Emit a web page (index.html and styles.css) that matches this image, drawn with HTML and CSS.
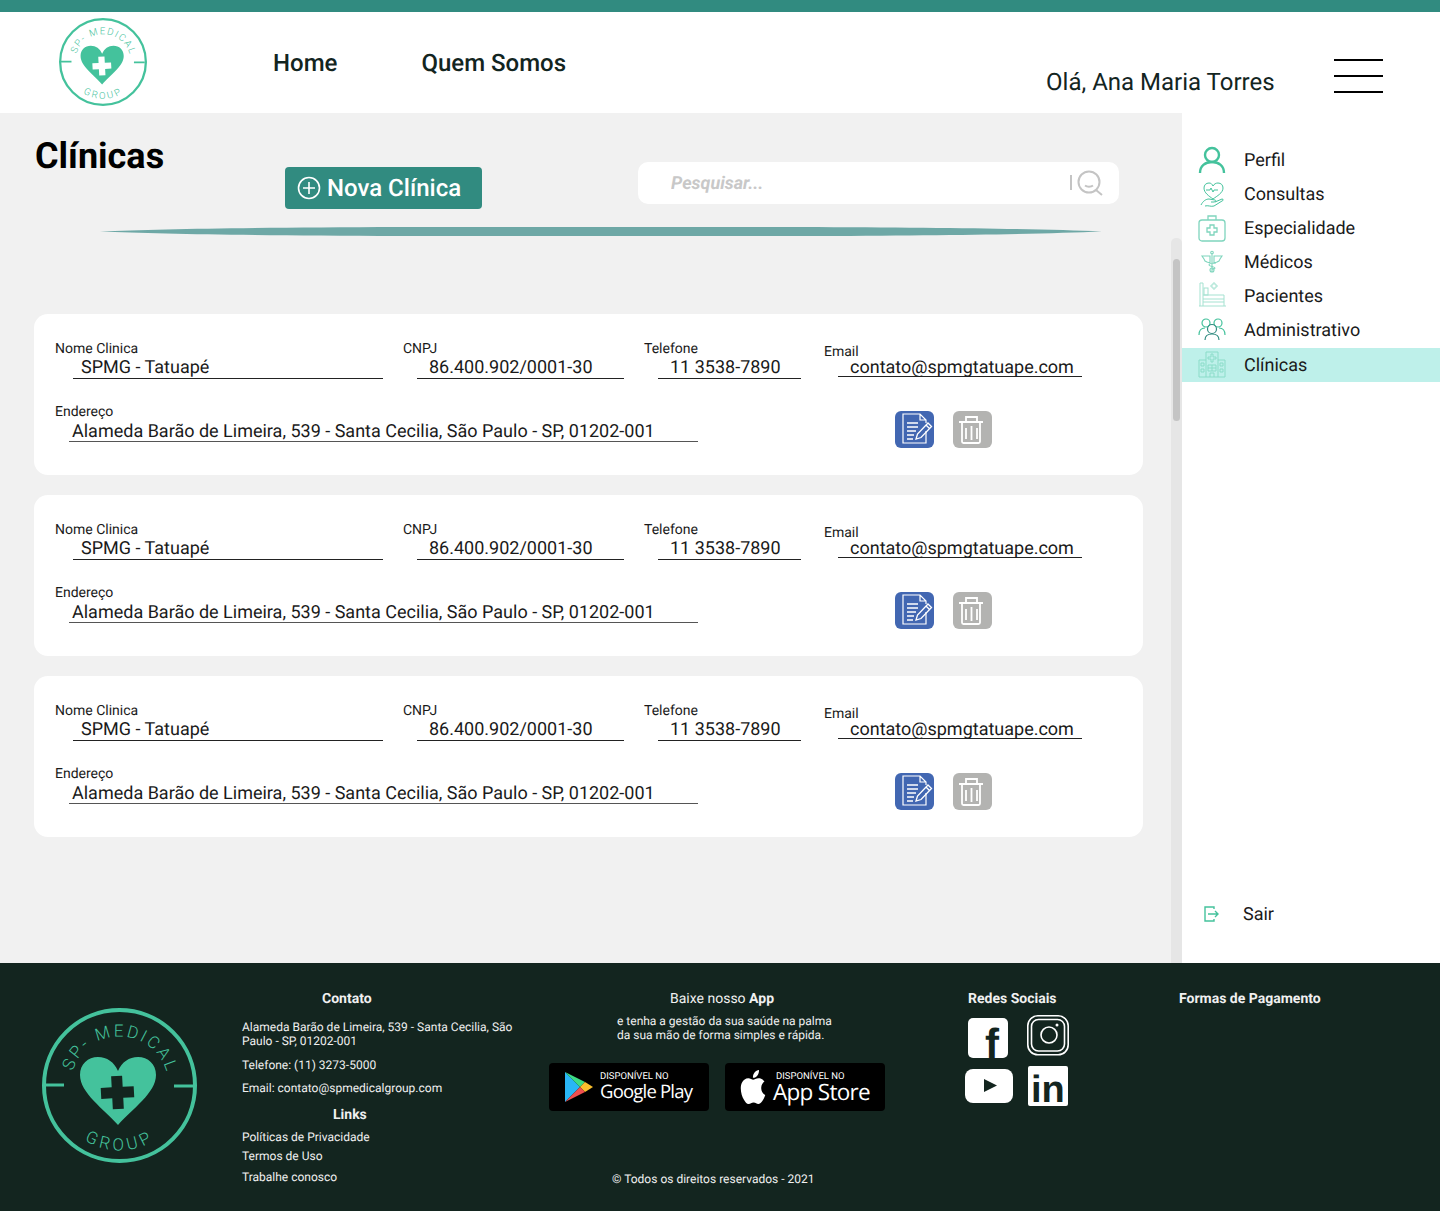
FILE: index.html
```html
<!DOCTYPE html>
<html lang="en">
<head>
    <meta charset="UTF-8">
    <meta name="viewport" content="width=device-width, initial-scale=1.0">
    <title>SP Medical Group - Clínicas</title>
    <link rel="stylesheet" href="styles.css">
</head>
<body>
    <svg class="defs" width="0" height="0">
        <symbol id="logo" viewBox="0 0 155 155" overflow="visible">
            <path id="arcTop" d="M28.5 77.5a49 49 0 0 1 98 0" fill="none"/>
            <path id="arcBottom" d="M12.5 77.5a65 65 0 0 0 130 0" fill="none"/>
            <circle cx="77.5" cy="77.5" r="75.5" fill="none" stroke="currentColor" stroke-width="4"/>
            <path d="M3 77h19M132 78h19" stroke="currentColor" stroke-width="3" fill="none"/>
            <path d="M76 117C62 101 38 85 38 67c0-11 8-18 18-18 9 0 16 5 20 14 4-9 11-14 20-14 10 0 18 7 18 18 0 18-24 34-38 50z" fill="currentColor"/>
            <path d="M70 68h11v11h11v11H81v11H70V90H59V79h11z" class="logo-cut" transform="rotate(-3 76 85)"/>
            <text class="logo-text" fill="currentColor" text-anchor="middle"><textPath href="#arcTop" startOffset="51%" textLength="128">SP- MEDICAL</textPath></text>
            <text class="logo-text" fill="currentColor" text-anchor="middle"><textPath href="#arcBottom" startOffset="50%" textLength="74">GROUP</textPath></text>
        </symbol>
        <symbol id="icon-edit" viewBox="0 0 39 37">
            <rect width="39" height="37" rx="6" fill="#4267b2"/>
            <path d="M31 20v12H8V3h17l6 6v3M25 3v6h6" fill="none" stroke="#fff" stroke-width="1.2"/>
            <path d="M12 12h11M12 16h11M12 20h9M12 24h7M12 28h6" stroke="#fff" stroke-width="1.3" fill="none"/>
            <path d="M21 28l1.5-5L33 12l3.5 3.5L26 26.5zM31 14l3.5 3.5" fill="none" stroke="#fff" stroke-width="1.3"/>
        </symbol>
        <symbol id="icon-trash" viewBox="0 0 39 37">
            <rect width="39" height="37" rx="6" fill="#b3b3b1"/>
            <path d="M6 11h24M13 10.5V6h11v4.5M9 12v18.5q0 1.5 1.5 1.5h15q1.500 0 1.500-1.500V12" fill="none" stroke="#fff" stroke-width="1.8"/>
            <path d="M13 17v11M18.5 15v14M24 17v11" stroke="#fff" stroke-width="1.8" fill="none"/>
        </symbol>
    </svg>

    <div class="topbar"></div>

    <header class="header">
        <svg class="header-logo"><use href="#logo"/></svg>
        <nav class="nav">
            <a class="nav-home">Home</a>
            <a class="nav-about">Quem Somos</a>
        </nav>
        <div class="user">Olá, Ana Maria Torres</div>
        <div class="burger"><span></span><span></span><span></span></div>
    </header>

    <div class="content">
        <main class="main">
            <div class="toolbar">
                <h1>Clínicas</h1>
                <button type="button" class="new-btn">
                    <svg width="24" height="24" viewBox="0 0 24 24" fill="none" stroke="#fff" stroke-width="1.6"><circle cx="12" cy="12" r="10.5"/><path d="M12 6v12M6 12h12"/></svg>
                    Nova Clínica
                </button>
                <div class="search">
                    <input type="text" placeholder="Pesquisar...">
                    <svg width="33" height="26" viewBox="0 0 33 26" fill="none" stroke="#c4c4c4" stroke-width="2"><path d="M1 5v15"/><circle cx="19" cy="12" r="10.5"/><path d="M26 20l6 5M15 15.5c2 1.5 6 1.5 8 0"/></svg>
                </div>
            </div>

            <svg class="divider" viewBox="0 0 1002 9" preserveAspectRatio="none"><path d="M0 4.5C60 2 150 .5 300 0h400c150 .5 240 2 302 4.5C940 7 850 8.5 700 9H300C150 8.5 60 7 0 4.5z"/></svg>

            <section class="cards">
                <article class="card">
                    <div class="row">
                        <div class="field f-name"><label>Nome Clinica</label><div class="value">SPMG - Tatuapé</div></div>
                        <div class="field f-cnpj"><label>CNPJ</label><div class="value">86.400.902/0001-30</div></div>
                        <div class="field f-phone"><label>Telefone</label><div class="value">11 3538-7890</div></div>
                        <div class="field f-email"><label>Email</label><div class="value">contato@spmgtatuape.com</div></div>
                    </div>
                    <div class="row row-address">
                        <div class="field f-address"><label>Endereço</label><div class="value">Alameda Barão de Limeira, 539 - Santa Cecilia, São Paulo - SP, 01202-001</div></div>
                        <div class="actions">
                            <svg class="action"><use href="#icon-edit"/></svg>
                            <svg class="action"><use href="#icon-trash"/></svg>
                        </div>
                    </div>
                </article>
                <article class="card">
                    <div class="row">
                        <div class="field f-name"><label>Nome Clinica</label><div class="value">SPMG - Tatuapé</div></div>
                        <div class="field f-cnpj"><label>CNPJ</label><div class="value">86.400.902/0001-30</div></div>
                        <div class="field f-phone"><label>Telefone</label><div class="value">11 3538-7890</div></div>
                        <div class="field f-email"><label>Email</label><div class="value">contato@spmgtatuape.com</div></div>
                    </div>
                    <div class="row row-address">
                        <div class="field f-address"><label>Endereço</label><div class="value">Alameda Barão de Limeira, 539 - Santa Cecilia, São Paulo - SP, 01202-001</div></div>
                        <div class="actions">
                            <svg class="action"><use href="#icon-edit"/></svg>
                            <svg class="action"><use href="#icon-trash"/></svg>
                        </div>
                    </div>
                </article>
                <article class="card">
                    <div class="row">
                        <div class="field f-name"><label>Nome Clinica</label><div class="value">SPMG - Tatuapé</div></div>
                        <div class="field f-cnpj"><label>CNPJ</label><div class="value">86.400.902/0001-30</div></div>
                        <div class="field f-phone"><label>Telefone</label><div class="value">11 3538-7890</div></div>
                        <div class="field f-email"><label>Email</label><div class="value">contato@spmgtatuape.com</div></div>
                    </div>
                    <div class="row row-address">
                        <div class="field f-address"><label>Endereço</label><div class="value">Alameda Barão de Limeira, 539 - Santa Cecilia, São Paulo - SP, 01202-001</div></div>
                        <div class="actions">
                            <svg class="action"><use href="#icon-edit"/></svg>
                            <svg class="action"><use href="#icon-trash"/></svg>
                        </div>
                    </div>
                </article>
            </section>

            <div class="scroll-track"><div class="scroll-thumb"></div></div>
        </main>

        <aside class="sidebar">
            <a class="side-item">
                <svg viewBox="0 0 28 28" fill="none" stroke="#44c29c" stroke-width="2.4"><circle cx="14" cy="9" r="7"/><path d="M2 27c0-7 5-11 12-11s12 4 12 11"/></svg>
                Perfil
            </a>
            <a class="side-item">
                <svg viewBox="0 0 28 28" fill="none" stroke="#44c29c" stroke-width="1"><path d="M15 19c-4-3-9-6-9-11 0-3 2-5 5-5 2 0 3 1 4 3 1-2 3-3 5-3 3 0 5 2 5 5 0 5-6 8-10 11z"/><path d="M8 10h4l1-2 2 4 1-2h4"/><path d="M3 25c2-4 5-6 8-6 2 0 4 1 6 1 1 0 1 2-1 2h-3m4 0l7-3c2 0 1 2 0 2l-8 5c-3 1-6-1-9 0"/></svg>
                Consultas
            </a>
            <a class="side-item">
                <svg viewBox="0 0 28 28" fill="none" stroke="#7fd5bd" stroke-width="1.3"><rect x="1" y="6" width="26" height="21" rx="3"/><path d="M10 6V2h8v4"/><path d="M12 11h4v3h3v4h-3v3h-4v-3H9v-4h3z"/></svg>
                Especialidade
            </a>
            <a class="side-item">
                <svg viewBox="0 0 28 28" fill="none" stroke="#7fd5bd" stroke-width="1.1"><circle cx="14" cy="4.5" r="1.3"/><path d="M14 6v18"/><path d="M12 8L4 8l2 3 1 2 2 1 3 1zM16 8l8 0-2 3-1 2-2 1-3 1z"/><path d="M18 15c-3 0-7 .5-7 2s6 1.500 6 3-3 1-3 1"/><circle cx="14" cy="22" r="2"/></svg>
                Médicos
            </a>
            <a class="side-item">
                <svg viewBox="0 0 28 28" fill="none" stroke="#a5e2d1" stroke-width="1"><path d="M1 24h27M2 24V1h3v23M5 13h21v11M5 17h21M5 20h21"/><rect x="6" y="6" width="4" height="7"/><path d="M15 1h2v2h2v2h-2v2h-2V5h-2V3h2z"/></svg>
                Pacientes
            </a>
            <a class="side-item">
                <svg viewBox="0 0 28 28" fill="none" stroke-width="1.2"><g stroke="#44c29c"><circle cx="8" cy="7" r="4"/><circle cx="20" cy="7" r="4"/><path d="M1 19c0-4 2-7 6-7M27 19c0-4-2-7-6-7"/></g><g stroke="#318b80"><circle cx="14" cy="13" r="4.5"/><path d="M7 24c0-4 3-6 7-6s7 2 7 6"/></g></svg>
                Administrativo
            </a>
            <a class="side-item side-active">
                <svg viewBox="0 0 28 28" fill="none" stroke="#8adcc8" stroke-width="1"><path d="M1 26V9h7M27 26V9h-7M8 26V1h12v25M1 26h26"/><path d="M13 3h2v3h3v2h-3v3h-2V8h-3V6h3z"/><path d="M3 12h3v3H3zM3 18h3v3H3zM22 12h3v3h-3zM22 18h3v3h-3zM10 14h8v6h-8zM14 14v6M10 17h8M12 26v-4h4v4"/></svg>
                Clínicas
            </a>
            <a class="side-item side-exit">
                <svg viewBox="0 0 16 16" fill="none" stroke="#44c29c" stroke-width="1.4"><path d="M11 3V1H2v14h9v-2M5 8h10M12 5l3 3-3 3"/></svg>
                Sair
            </a>
        </aside>
    </div>

    <footer class="footer">
        <svg class="footer-logo"><use href="#logo"/></svg>

        <div class="f-contact">
            <h4 class="f-contact-title">Contato</h4>
            <p class="f-address-text">Alameda Barão de Limeira, 539 - Santa Cecilia, São Paulo - SP, 01202-001</p>
            <p class="f-tel">Telefone: (11) 3273-5000</p>
            <p class="f-mail">Email: contato@spmedicalgroup.com</p>
            <h4 class="f-links-title">Links</h4>
            <p class="f-link1">Políticas de Privacidade</p>
            <p class="f-link2">Termos de Uso</p>
            <p class="f-link3">Trabalhe conosco</p>
        </div>

        <div class="f-app">
            <h4 class="f-app-title">Baixe nosso <b>App</b></h4>
            <p class="f-app-text">e tenha a gestão da sua saúde na palma<br>da sua mão de forma simples e rápida.</p>
            <div class="badges">
                <div class="badge badge-google">
                    <svg width="28" height="30" viewBox="0 0 28 30"><path d="M0 0l15 15L0 30z" fill="#29b6f6"/><path d="M0 0l20 10-5 5z" fill="#3ddc84"/><path d="M20 10l8 5-8 5-5-5z" fill="#fbc02d"/><path d="M0 30l20-10-5-5z" fill="#ef4f4f"/></svg>
                    <div><small>DISPONÍVEL NO</small><strong>Google Play</strong></div>
                </div>
                <div class="badge badge-apple">
                    <svg width="30" height="34" viewBox="0 0 24 24" preserveAspectRatio="none" fill="#fff"><path d="M12.152 6.896c-.948 0-2.415-1.078-3.96-1.04-2.04.027-3.91 1.183-4.961 3.014-2.117 3.675-.546 9.103 1.519 12.09 1.013 1.454 2.208 3.09 3.792 3.039 1.52-.065 2.09-.987 3.935-.987 1.831 0 2.35.987 3.96.948 1.637-.026 2.676-1.48 3.676-2.948 1.156-1.688 1.636-3.325 1.662-3.415-.039-.013-3.182-1.221-3.22-4.857-.026-3.04 2.48-4.494 2.597-4.559-1.429-2.09-3.623-2.324-4.39-2.376-2-.156-3.675 1.09-4.61 1.09zM15.53 3.83c.843-1.012 1.4-2.427 1.245-3.83-1.207.052-2.662.805-3.532 1.818-.78.896-1.454 2.338-1.273 3.714 1.338.104 2.715-.688 3.559-1.701"/></svg>
                    <div><small>DISPONÍVEL NO</small><strong>App Store</strong></div>
                </div>
            </div>
            <p class="copyright">© Todos os direitos reservados - 2021</p>
        </div>

        <div class="f-social">
            <h4>Redes Sociais</h4>
            <svg class="social-icons" width="105" height="92" viewBox="0 0 105 92">
                <rect x="3" y="3" width="40" height="40" rx="5" fill="#fff"/>
                <text x="20" y="43" class="social-f">f</text>
                <rect x="62.8" y=".8" width="40.4" height="39" rx="10" fill="none" stroke="#fff" stroke-width="1.6"/>
                <rect x="66.5" y="4.5" width="33" height="31.5" rx="7" fill="none" stroke="#fff" stroke-width="1.6"/>
                <circle cx="84" cy="20" r="8" fill="none" stroke="#fff" stroke-width="1.6"/>
                <circle cx="92" cy="10" r="1.5" fill="#fff"/>
                <rect x="0" y="54" width="48" height="34" rx="8" fill="#fff"/>
                <path d="M19 64l13 6.5-13 6.5z" fill="#13251f"/>
                <rect x="63" y="51" width="40" height="40" rx="2" fill="#fff"/>
                <text x="66" y="87" class="social-in">in</text>
            </svg>
        </div>

        <div class="f-pay">
            <h4>Formas de Pagamento</h4>
        </div>
    </footer>
</body>
</html>
```

FILE: styles.css
```css
* {
    box-sizing: border-box;
}

body {
    margin: 0;
    background-color: #f1f1f1;
    font-family: 'Roboto', sans-serif;
    color: #13251f;
    text-rendering: geometricPrecision;
}

.defs {
    position: absolute;
}

.logo-text {
    font-family: 'Roboto', sans-serif;
    font-size: 17px;
    font-weight: 300;
    letter-spacing: 3px;
}

.logo-cut {
    fill: var(--cut);
}

.topbar {
    height: 12px;
    background-color: #318b80;
}

/* header */
.header {
    height: 101px;
    background-color: #fff;
    display: flex;
    align-items: flex-start;
}

.header-logo {
    width: 88px;
    height: 88px;
    margin: 6px 1px 0 59px;
    color: #44c29c;
    --cut: #fff;
    overflow: visible;
}

.nav {
    display: flex;
    margin: 37px 0 0 125px;
    font-size: 24px;
    font-weight: 500;
    line-height: 28px;
}

.nav-about {
    margin-left: 84px;
}

.user {
    margin: 56px 0 0 480px;
    font-size: 24px;
    line-height: 28px;
    width: 288px;
}

.burger {
    width: 49px;
    margin-top: 47px;
    display: flex;
    flex-direction: column;
    gap: 14px;
}

.burger span {
    height: 2px;
    background-color: #000;
}

/* main area */
.content {
    display: flex;
    height: 850px;
}

.main {
    position: relative;
    width: 1182px;
}

.toolbar {
    display: flex;
    align-items: flex-start;
    padding-left: 35px;
    height: 96px;
}

h1 {
    width: 250px;
    margin: 22px 0 0 0;
    font-size: 36px;
    line-height: 42px;
    font-weight: 700;
    color: #000;
}

.new-btn {
    width: 197px;
    height: 42px;
    margin-top: 54px;
    padding: 0 0 0 12px;
    display: flex;
    align-items: center;
    gap: 6px;
    background-color: #318b80;
    color: #fff;
    border: none;
    border-radius: 4px;
    font-family: inherit;
    font-size: 24px;
    font-weight: 500;
    text-rendering: geometricPrecision;
}

.search {
    width: 481px;
    height: 42px;
    margin: 49px 0 0 156px;
    padding: 0 16px 0 33px;
    display: flex;
    align-items: center;
    background-color: #fff;
    border-radius: 10px;
}

.search input {
    flex: 1;
    border: none;
    outline: none;
    padding: 0;
    background: none;
    font-family: inherit;
    font-size: 18px;
    font-weight: 700;
    font-style: italic;
    text-rendering: geometricPrecision;
}

.search input::placeholder {
    color: #c8c8c8;
    opacity: 1;
}

.divider {
    display: block;
    width: 1002px;
    height: 9px;
    margin: 18px 0 0 100px;
    fill: #6ea8a6;
}

.cards {
    width: 1109px;
    margin: 78px 0 0 34px;
    display: flex;
    flex-direction: column;
    gap: 20px;
}

.card {
    height: 161px;
    padding: 27px 0 0 21px;
    background-color: #fff;
    border-radius: 14px;
    color: #1a1a1a;
}

.row {
    display: flex;
    align-items: flex-start;
    gap: 20px;
}

.row-address {
    margin-top: 25px;
}

.field label {
    display: block;
    font-size: 14px;
    line-height: 16px;
}

.value {
    font-size: 18px;
    line-height: 21px;
    border-bottom: 1px solid #222;
    white-space: nowrap;
}

.f-name {
    width: 328px;
}

.f-name .value {
    margin-left: 18px;
    padding-left: 8px;
}

.f-cnpj {
    width: 221px;
}

.f-phone {
    width: 157px;
}

.f-cnpj .value,
.f-phone .value,
.f-email .value {
    margin-left: 14px;
    padding-left: 12px;
}

.f-email {
    width: 258px;
    margin-left: 3px;
    padding-top: 3px;
}

.f-email .value {
    line-height: 16px;
}

.f-address {
    width: 643px;
}

.f-address .value {
    margin-left: 14px;
    padding-top: 3px;
    padding-left: 3px;
    line-height: 18px;
    border-bottom: 1.5px solid #555;
}

.actions {
    display: flex;
    gap: 19px;
    margin: 7px 0 0 177px;
}

.action {
    width: 39px;
    height: 37px;
}

.scroll-track {
    position: absolute;
    left: 1171px;
    top: 125px;
    width: 11px;
    height: 725px;
    background-color: #e6e6e6;
    border-radius: 5px 5px 0 0;
}

.scroll-thumb {
    width: 7px;
    height: 162px;
    margin: 21px 0 0 2px;
    background-color: #c4c4c4;
    border-radius: 4px;
}

/* sidebar */
.sidebar {
    width: 258px;
    padding: 30px 0 32px;
    background-color: #fff;
    display: flex;
    flex-direction: column;
}

.side-item {
    height: 34px;
    padding-left: 16px;
    display: flex;
    align-items: center;
    gap: 18px;
    font-size: 18px;
    color: #1a1a1a;
}

.side-item svg {
    width: 28px;
    height: 28px;
    flex-shrink: 0;
}

.side-active {
    background-color: #bef0ea;
    margin-top: 1px;
}

.side-exit {
    margin-top: auto;
    padding-left: 21px;
    gap: 24px;
}

.side-exit svg {
    width: 16px;
    height: 16px;
}

/* footer */
.footer {
    height: 248px;
    background-color: #13251f;
    color: #f0f0f0;
    display: flex;
    align-items: flex-start;
    padding-top: 28px;
    font-size: 12px;
}

.footer h4 {
    margin: 0;
    font-size: 14px;
    line-height: 16px;
    font-weight: 700;
}

.footer p {
    margin: 0;
    line-height: 14px;
}

.footer-logo {
    width: 155px;
    height: 155px;
    margin: 17px 0 0 42px;
    color: #44c29c;
    --cut: #13251f;
    flex-shrink: 0;
    overflow: visible;
}

.f-contact {
    width: 280px;
    margin-left: 45px;
}

.f-contact-title {
    margin-left: 80px !important;
}

.f-address-text {
    margin-top: 13px !important;
    width: 275px;
}

.f-tel {
    margin-top: 10px !important;
}

.f-mail {
    margin-top: 9px !important;
}

.f-links-title {
    margin: 12px 0 0 91px !important;
}

.f-link1 {
    margin-top: 7px !important;
}

.f-link2 {
    margin-top: 5px !important;
}

.f-link3 {
    margin-top: 7px !important;
}

.f-app {
    width: 336px;
    margin-left: 27px;
}

.f-app-title {
    margin-left: 121px !important;
    font-weight: 400 !important;
}

.f-app-text {
    margin: 7px 0 0 68px !important;
}

.badges {
    display: flex;
    gap: 16px;
    margin-top: 21px;
}

.badge {
    width: 160px;
    height: 48px;
    background-color: #000;
    border-radius: 4px;
    display: flex;
    align-items: center;
    color: #fff;
}

.badge small {
    display: block;
    padding-top: 1px;
    font-size: 9.5px;
    line-height: 10px;
}

.badge strong {
    display: block;
    margin-top: -1px;
    font-family: 'Open Sans', sans-serif;
    font-weight: 400;
    line-height: 22px;
}

.badge-google {
    padding-left: 16px;
    gap: 7px;
}

.badge-google strong {
    font-size: 18.5px;
    letter-spacing: -.8px;
}

.badge-apple {
    padding-left: 13px;
    gap: 5px;
}

.badge-apple small {
    margin-left: 3px;
}

.badge-apple strong {
    font-size: 22.5px;
    letter-spacing: -.7px;
}

.copyright {
    margin: 61px 0 0 63px !important;
}

.f-social {
    width: 105px;
    margin-left: 80px;
}

.f-social h4 {
    margin-left: 3px;
    white-space: nowrap;
}

.social-icons {
    display: block;
    margin-top: 8px;
    overflow: visible;
}

.social-f {
    font-family: 'Liberation Sans', sans-serif;
    font-weight: 700;
    font-size: 42px;
    fill: #13251f;
}

.social-in {
    font-family: 'Liberation Sans', sans-serif;
    font-weight: 700;
    font-size: 38px;
    fill: #13251f;
}

.f-pay {
    margin-left: 109px;
}
```
